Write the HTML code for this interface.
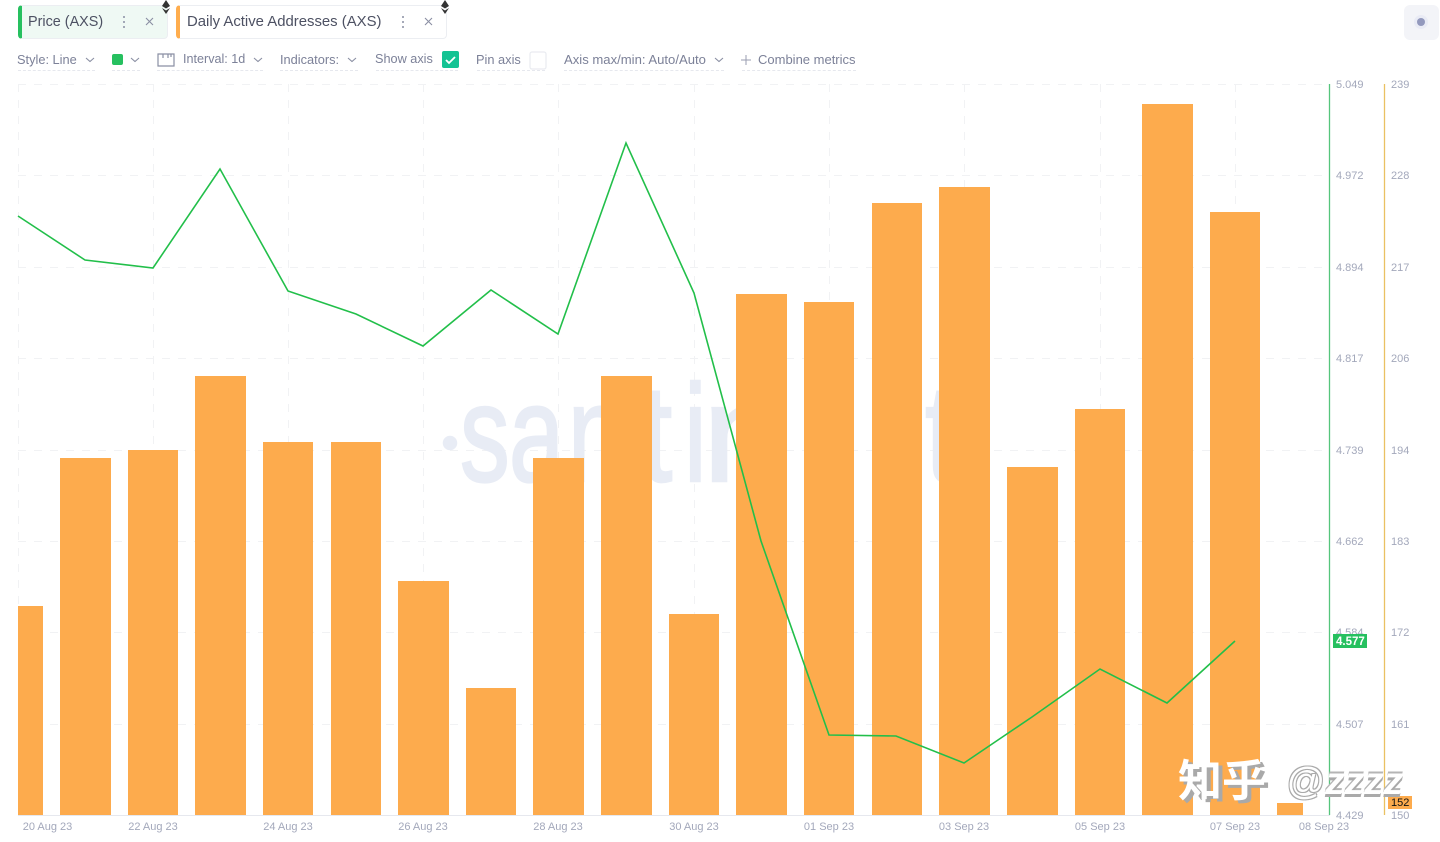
<!DOCTYPE html>
<html><head><meta charset="utf-8">
<style>
html,body{margin:0;padding:0;background:#fff;width:1440px;height:842px;overflow:hidden}
body{position:relative;font-family:"Liberation Sans",sans-serif;color:#7a7f96;filter:blur(.3px)}
.a{position:absolute;white-space:nowrap}
.tab{position:absolute;top:5px;height:34px;box-sizing:border-box;border-radius:4px;border:1px solid #eceef2}
.t{font-size:14.9px;line-height:17px;color:#4d5163;top:14px}
.c{font-size:12.6px;line-height:15px;color:#7c8198;top:52px}
.u{position:absolute;top:70px;height:0;border-top:1px dashed #e6e8ee}
</style></head><body>
<div class="tab" style="left:18px;width:150px;background:#eff9f4;border-left:4px solid #26c05f"></div>
<div class="tab" style="left:176px;width:271px;background:#fff;border-left:4px solid #ffad4d"></div>
<div class="a t" style="left:28px;font-size:14.4px">Price (AXS)</div>
<div class="a t" style="left:187px">Daily Active Addresses (AXS)</div>
<svg class="a" style="left:0;top:0" width="460" height="80" fill="none">
<g fill="#8a8fa3"><circle cx="124" cy="17" r="1"/><circle cx="124" cy="22" r="1"/><circle cx="124" cy="27" r="1"/><circle cx="403" cy="17" r="1"/><circle cx="403" cy="22" r="1"/><circle cx="403" cy="27" r="1"/></g>
<path d="M146 18l7 7M153 18l-7 7M425 18l7 7M432 18l-7 7" stroke="#8a8fa3" stroke-width="1.1"/>
<path d="M166 0l4 6-4 2.500-4-2.500zM162 8l4 2.500 4-2.500-4 6zM445 0l4 6-4 2.500-4-2.500zM441 8l4 2.500 4-2.500-4 6z" fill="#333"/>
<path d="M86 58l4 3.500 4-3.500M131 58l4 3.500 4-3.500M254 58l4 3.500 4-3.500M348 58l4 3.500 4-3.500" stroke="#8a8fa3" stroke-width="1.100"/>
<rect x="112" y="54" width="11" height="11" rx="2" fill="#26c05f"/>
<path d="M158 54h16v12h-16zM163 54v4M168 54v4M171 54v3" stroke="#8a8fa3" stroke-width="1.200"/>
<rect x="442" y="51" width="17" height="17" rx="2" fill="#14c393"/>
<path d="M446 60l3 3 6-6" stroke="#fff" stroke-width="1.800"/>
</svg>
<div class="a c" style="left:17px;font-size:12.800px">Style: Line</div>
<div class="a c" style="left:183px">Interval: 1d</div>
<div class="a c" style="left:280px;font-size:12.800px">Indicators:</div>
<div class="a c" style="left:375px;font-size:12.700px">Show axis</div>
<div class="a c" style="left:476px;font-size:12.800px">Pin axis</div>
<div class="a c" style="left:564px;font-size:13.100px">Axis max/min: Auto/Auto</div>
<div class="a c" style="left:758px;font-size:13px">Combine metrics</div>
<div class="u" style="left:18px;width:77px"></div><div class="u" style="left:112px;width:28px"></div><div class="u" style="left:157px;width:106px"></div><div class="u" style="left:280px;width:78px"></div><div class="u" style="left:376px;width:82px"></div><div class="u" style="left:477px;width:68px"></div><div class="u" style="left:564px;width:160px"></div><div class="u" style="left:742px;width:114px"></div>
<svg class="a" style="left:0;top:0" width="1440" height="842" fill="none">
<rect x="530" y="52" width="16" height="17" rx="2" fill="#fff" stroke="#e9ebf0" stroke-width="1.200"/>
<path d="M741 60h10M746 55v10" stroke="#9a9eb0" stroke-width="1"/>
<path d="M715 58l4 3.500 4-3.500" stroke="#8a8fa3" stroke-width="1.100"/>
<rect x="1404" y="5" width="35" height="35" rx="6" fill="#f3f4f8"/>
<circle cx="1421" cy="22" r="7" fill="#e9ebf5"/><circle cx="1421" cy="22" r="4" fill="#9399bd"/>
<g stroke="#f1f2f4" stroke-width="1" stroke-dasharray="8 8">
<path d="M18 84.500H1328M18 175.500H1328M18 267.500H1328M18 358.500H1328M18 450.500H1328M18 541.500H1328M18 632.500H1328M18 724.500H1328"/>
<path d="M18.500 84V815M153.500 84V815M288.500 84V815M423.500 84V815M558.500 84V815M694.500 84V815M829.500 84V815M964.500 84V815M1100.500 84V815M1235.500 84V815"/>
</g>
<g fill="#e8ecf5" stroke="#e8ecf5" stroke-width="2.500" font-family="Liberation Sans,sans-serif" font-size="138">
<circle cx="450" cy="443" r="6"/>
<text transform="translate(460,481) scale(.72,1)">s</text>
<text transform="translate(509,481) scale(.72,1)">a</text>
<text transform="translate(568,481) scale(.72,1)">n</text>
<text transform="translate(640,481) scale(.84,1)">t</text>
<text transform="translate(684,481) scale(.74,1)">i</text>
<text transform="translate(703,481) scale(1.060,1)">n</text>
<text transform="translate(925,481) scale(.84,1)">t</text>
</g>
<g fill="#fdab4d">
<rect x="18" y="606" width="25" height="209"/>
<rect x="60" y="458" width="51" height="357"/>
<rect x="128" y="450" width="50" height="365"/>
<rect x="195" y="376" width="51" height="439"/>
<rect x="263" y="442" width="50" height="373"/>
<rect x="331" y="442" width="50" height="373"/>
<rect x="398" y="581" width="51" height="234"/>
<rect x="466" y="688" width="50" height="127"/>
<rect x="533" y="458" width="51" height="357"/>
<rect x="601" y="376" width="51" height="439"/>
<rect x="669" y="614" width="50" height="201"/>
<rect x="736" y="294" width="51" height="521"/>
<rect x="804" y="302" width="50" height="513"/>
<rect x="872" y="203" width="50" height="612"/>
<rect x="939" y="187" width="51" height="628"/>
<rect x="1007" y="467" width="51" height="348"/>
<rect x="1075" y="409" width="50" height="406"/>
<rect x="1142" y="104" width="51" height="711"/>
<rect x="1210" y="212" width="50" height="603"/>
<rect x="1277" y="803" width="26" height="12"/>
</g>
<polyline points="18,216 85,260 153,268 220,169 288,291 356,314 423,346 491,290 558,334 626,143 694,293 761,541 829,735 896,736 964,763 1032,717 1100,669 1167,703 1235,641" stroke="#22bf4a" stroke-width="1.600"/>
<path d="M18 815.500H1330" stroke="#e6e8ee"/>
<path d="M1329.500 84V815" stroke="#55c57c" stroke-width="1.300"/>
<path d="M1384.500 84V815" stroke="#eac162" stroke-width="1.300"/>
<g font-family="Liberation Sans,sans-serif" font-size="11" fill="#a3a8bb">
<text x="1336" y="88">5.049</text><text x="1336" y="179">4.972</text><text x="1336" y="271">4.894</text><text x="1336" y="362">4.817</text><text x="1336" y="454">4.739</text><text x="1336" y="545">4.662</text><text x="1336" y="636">4.584</text><text x="1336" y="728">4.507</text><text x="1336" y="819">4.429</text>
<text x="1391" y="88">239</text><text x="1391" y="179">228</text><text x="1391" y="271">217</text><text x="1391" y="362">206</text><text x="1391" y="454">194</text><text x="1391" y="545">183</text><text x="1391" y="636">172</text><text x="1391" y="728">161</text><text x="1391" y="819">150</text>
<g text-anchor="middle"><text x="47.500" y="830">20 Aug 23</text><text x="153" y="830">22 Aug 23</text><text x="288" y="830">24 Aug 23</text><text x="423" y="830">26 Aug 23</text><text x="558" y="830">28 Aug 23</text><text x="694" y="830">30 Aug 23</text><text x="829" y="830">01 Sep 23</text><text x="964" y="830">03 Sep 23</text><text x="1100" y="830">05 Sep 23</text><text x="1235" y="830">07 Sep 23</text><text x="1324" y="830">08 Sep 23</text></g>
</g>
<rect x="1333" y="634" width="34" height="14" fill="#26c05f"/>
<text x="1336" y="645" font-family="Liberation Sans,sans-serif" font-size="11.500" font-weight="700" fill="#fff">4.577</text>
<rect x="1388" y="796" width="24" height="13" fill="#fdab4d"/>
<text x="1391" y="806" font-family="Liberation Sans,sans-serif" font-size="11" fill="#111">152</text>
</svg>
<div class="a" style="left:1178px;top:757px;font-size:44px;line-height:50px;font-family:'Liberation Sans','Noto Sans CJK SC',sans-serif;color:#fff;text-shadow:4px 3px 0 #a9a9a9;font-weight:700">知乎</div>
<div class="a" style="left:1286px;top:757px;font-size:38px;line-height:50px;font-style:italic;color:#fff;text-shadow:1px 1px 0 #aaa,-1px -1px 0 #aaa,1px -1px 0 #aaa,-1px 1px 0 #aaa">@</div>
<div class="a" style="left:1325px;top:757px;font-size:39px;line-height:50px;font-style:italic;font-weight:700;color:#fff;text-shadow:0 3px 0 #aaa,0 -2px 0 #b5b5b5">zzzz</div>
</body></html>
